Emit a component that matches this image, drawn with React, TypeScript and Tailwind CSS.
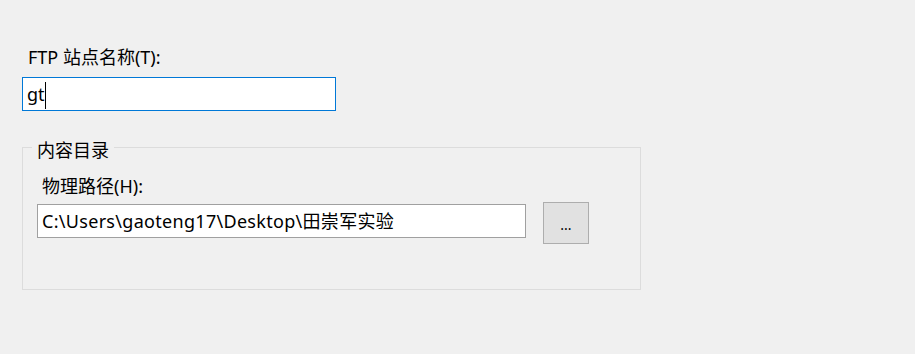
import React from "react";

export default function App() {
  const font = { fontFamily: '"Noto Sans", "Noto Sans CJK SC", sans-serif' };
  return (
    <div
      className="w-[915px] h-[354px] bg-[#f0f0f0] pl-[22px] pt-[46px] text-black text-[18px] leading-[22px]"
      style={font}
    >
      <div className="ml-[6px]">FTP 站点名称(T):</div>
      <div className="mt-[9px] w-[314px] h-[34px] border border-[#0078d7] bg-white pl-[4px] flex items-center">
        <span>gt</span>
        <span className="inline-block w-px h-[27px] bg-black mt-[2px]"></span>
      </div>
      <div className="relative mt-[36px] w-[619px] h-[143px] border border-[#dcdcdc] pl-[14px] pt-[27px]">
        <span className="absolute left-[9px] top-[-9px] bg-[#f0f0f0] px-[5px]">内容目录</span>
        <div className="ml-[5px]">物理路径(H):</div>
        <div className="mt-[5px] flex items-start">
          <div className="mt-[2px] w-[489px] h-[34px] border border-[#a0a0a0] bg-white pl-[4px] flex items-center whitespace-nowrap tracking-[0.3px]">
            C:\Users\gaoteng17\Desktop\田崇军实验
          </div>
          <div className="ml-[17px] w-[46px] h-[42px] border border-[#adadad] bg-[#e1e1e1] flex items-center justify-center text-[14px] pt-[4px]">
            ...
          </div>
        </div>
      </div>
    </div>
  );
}
